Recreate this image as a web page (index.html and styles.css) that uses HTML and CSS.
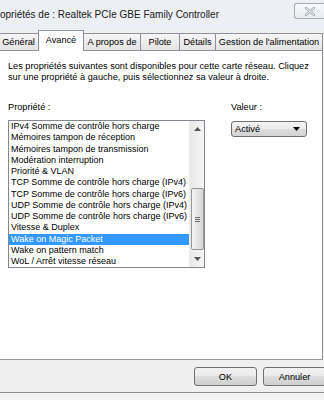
FILE: index.html
```html
<!DOCTYPE html>
<html lang="fr">
<head>
<meta charset="utf-8">
<title>Propriétés</title>
<link rel="stylesheet" href="styles.css">
</head>
<body>
<div class="window">
  <div class="titlebar">
    <span class="title">opriétés de : Realtek PCIe GBE Family Controller</span>
    <div class="close">
      <svg width="10" height="9" viewBox="0 0 10 9"><path d="M1 1 L9 8 M9 1 L1 8" stroke="#a9b0b8" stroke-width="2.4" stroke-linecap="square" fill="none"/><path d="M1 1 L9 8 M9 1 L1 8" stroke="#f4f6f8" stroke-width="1" fill="none"/></svg>
    </div>
  </div>
  <div class="tabs">
    <div class="tab t-general">Général</div>
    <div class="tab tab-active t-avance">Avancé</div>
    <div class="tab t-apropos">A propos de</div>
    <div class="tab t-pilote">Pilote</div>
    <div class="tab t-details">Détails</div>
    <div class="tab t-gestion">Gestion de l'alimentation</div>
  </div>
  <div class="panel">
    <p class="intro">Les propriétés suivantes sont disponibles pour cette carte réseau. Cliquez<br>sur une propriété à gauche, puis sélectionnez sa valeur à droite.</p>
    <div class="fields">
      <div class="col-prop">
        <div class="label">Propriété :</div>
        <div class="listbox">
          <ul class="items">
            <li>IPv4 Somme de contrôle hors charge</li>
            <li>Mémoires tampon de réception</li>
            <li>Mémoires tampon de transmission</li>
            <li>Modération interruption</li>
            <li>Priorité &amp; VLAN</li>
            <li>TCP Somme de contrôle hors charge (IPv4)</li>
            <li>TCP Somme de contrôle hors charge (IPv6)</li>
            <li>UDP Somme de contrôle hors charge (IPv4)</li>
            <li>UDP Somme de contrôle hors charge (IPv6)</li>
            <li>Vitesse &amp; Duplex</li>
            <li class="selected">Wake on Magic Packet</li>
            <li>Wake on pattern match</li>
            <li>WoL / Arrêt vitesse réseau</li>
          </ul>
          <div class="scrollbar">
            <div class="sb-btn"><svg width="7" height="4" viewBox="0 0 7 4"><path d="M0 4 L3.5 0 L7 4 Z" fill="#555"/></svg></div>
            <div class="sb-track">
              <div class="sb-thumb"><span class="grip"></span><span class="grip"></span><span class="grip"></span></div>
            </div>
            <div class="sb-btn"><svg width="7" height="4" viewBox="0 0 7 4"><path d="M0 0 L7 0 L3.5 4 Z" fill="#555"/></svg></div>
          </div>
        </div>
      </div>
      <div class="col-val">
        <div class="label">Valeur :</div>
        <div class="select">
          <span class="select-text">Activé</span>
          <svg class="caret" width="7" height="4" viewBox="0 0 7 4"><path d="M0 0 L7 0 L3.5 4 Z" fill="#000"/></svg>
        </div>
      </div>
    </div>
  </div>
  <div class="footer">
    <button class="btn">OK</button>
    <button class="btn">Annuler</button>
  </div>
  <div class="bottom-edge"></div>
</div>
</body>
</html>
```
FILE: styles.css
```css
html, body {
  margin: 0;
  padding: 0;
}
body {
  width: 324px;
  height: 400px;
  overflow: hidden;
  background: #f0f0f0;
  font-family: "Liberation Sans", Arial, sans-serif;
  font-size: 9.2px;
  color: #000;
}
.window {
  width: 324px;
  height: 400px;
  display: flex;
  flex-direction: column;
  overflow: hidden;
}
.titlebar {
  height: 30px;
  flex: none;
  display: flex;
  align-items: flex-start;
  background: #eceff3;
}
.title {
  font-size: 10px;
  line-height: 30px;
  color: #1a1a1a;
  white-space: nowrap;
}
.close {
  margin-left: auto;
  margin-top: 3px;
  width: 29px;
  height: 14px;
  border: 1px solid #a3acb7;
  border-right: none;
  border-radius: 3px 0 0 3px;
  background: linear-gradient(#f7f9fb, #e8ecf0);
  display: flex;
  align-items: center;
  justify-content: center;
}
.tabs {
  height: 20px;
  flex: none;
  display: flex;
  align-items: flex-end;
  margin-left: -2px;
  position: relative;
  z-index: 1;
}
.tab {
  box-sizing: border-box;
  height: 17px;
  line-height: 16px;
  text-align: center;
  white-space: nowrap;
  border: 1px solid #8e9199;
  border-bottom: none;
  background: linear-gradient(#f6f6f6, #e4e4e4);
  margin-right: -1px;
}
.tab-active {
  height: 21px;
  margin-bottom: -1px;
  line-height: 18px;
  background: #fff;
  position: relative;
  z-index: 2;
}
.t-general { width: 41px; }
.t-avance { width: 46px; }
.t-apropos { width: 58px; }
.t-pilote { width: 40px; }
.t-details { width: 37px; }
.t-gestion { width: 108px; }
.panel {
  box-sizing: border-box;
  width: 323px;
  height: 310px;
  flex: none;
  background: #fff;
  border-top: 1px solid #8e9199;
  border-right: 1px solid #8e9199;
  border-bottom: 1px solid #9a9a9a;
  padding: 10px 0 0 8px;
}
.intro {
  margin: 0;
  line-height: 11px;
  white-space: nowrap;
}
.fields {
  display: flex;
  margin-top: 19px;
  gap: 26px;
}
.label {
  line-height: 11px;
  margin-bottom: 7px;
}
.col-prop {
  width: 197px;
}
.listbox {
  box-sizing: border-box;
  width: 197px;
  height: 148px;
  border: 1px solid #828790;
  display: flex;
}
.items {
  list-style: none;
  margin: 0;
  padding: 0;
  flex: 1;
  min-width: 0;
  overflow: hidden;
  font-size: 9px;
}
.items li {
  height: 11.25px;
  line-height: 11.25px;
  padding-left: 2px;
  white-space: nowrap;
}
.items li.selected {
  background: #3399ff;
  color: #fff;
}
.scrollbar {
  width: 14px;
  flex: none;
  display: flex;
  flex-direction: column;
  background: linear-gradient(to right, #e9e9e9, #f6f6f6);
  border-left: 1px solid #ececec;
}
.sb-btn {
  height: 16px;
  flex: none;
  display: flex;
  align-items: center;
  justify-content: center;
}
.sb-track {
  flex: 1;
  display: flex;
  flex-direction: column;
  justify-content: flex-end;
  align-items: center;
  padding-bottom: 1px;
}
.sb-thumb {
  box-sizing: border-box;
  width: 13px;
  height: 62px;
  border: 1px solid #979797;
  border-radius: 2px;
  background: linear-gradient(to right, #f4f4f4, #e2e2e2 55%, #d6d6d6);
  display: flex;
  flex-direction: column;
  justify-content: center;
  align-items: center;
  gap: 1px;
}
.grip {
  width: 5px;
  height: 1px;
  background: #6e6e6e;
}
.col-val .label {
  margin-bottom: 8px;
}
.select {
  box-sizing: border-box;
  width: 76px;
  height: 16px;
  border: 1px solid #707070;
  border-radius: 3px;
  background: linear-gradient(#f3f3f3, #ebebeb 50%, #dddddd 50%, #d3d3d3);
  display: flex;
  align-items: center;
  padding: 0 6px 0 3px;
}
.select-text {
  flex: 1;
}
.footer {
  height: 32px;
  flex: none;
  box-sizing: border-box;
  display: flex;
  gap: 6px;
  padding: 7px 0 0 194px;
  width: 324px;
  overflow: hidden;
}
.btn {
  box-sizing: border-box;
  width: 63px;
  height: 19px;
  flex: none;
  border: 1px solid #707070;
  border-radius: 3px;
  background: linear-gradient(#f2f2f2, #ebebeb 50%, #dddddd 50%, #cfcfcf);
  font-family: "Liberation Sans", Arial, sans-serif;
  font-size: 9.2px;
  color: #000;
  padding: 0;
}
.bottom-edge {
  flex: 1;
  border-top: 1px solid #8c8c8c;
  background: #f3f3f3;
}
```
